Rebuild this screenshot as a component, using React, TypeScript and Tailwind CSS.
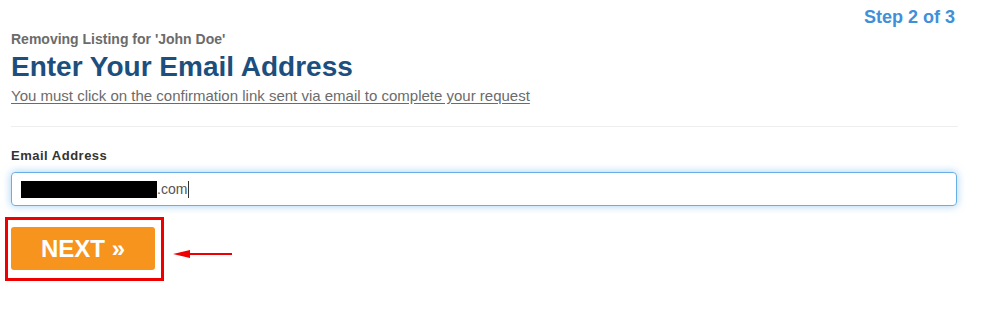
export default function App(): JSX.Element {
  return (
    <div
      className="h-[317px] w-[995px] bg-white"
      style={{ fontFamily: '"Liberation Sans", Arial, sans-serif' }}
    >
      <div className="w-[958px] pl-[11px] pt-[7px]">
        <div className="flex justify-end pr-[3px]">
          <span className="text-[18px] font-bold leading-[20px] text-[#3f8fda]">Step 2 of 3</span>
        </div>

        <p className="mt-[4px] text-[14px] font-bold leading-[16px] text-[#6b6b6b]">
          Removing Listing for 'John Doe'
        </p>
        <h1 className="mt-[4px] text-[28px] font-bold leading-[32px] text-[#1c4f7d]">
          Enter Your Email Address
        </h1>
        <p className="mt-[4px] text-[15px] leading-[18px] text-[#6b6b6b] underline underline-offset-[2px]">
          You must click on the confirmation link sent via email to complete your request
        </p>

        <hr className="mt-[21px] border-t border-[#eeeeee]" />

        <label className="mt-[21px] block text-[13px] font-bold leading-[16px] tracking-[0.5px] text-[#333]">
          Email Address
        </label>
        <div className="mt-[8px] flex h-[34px] w-[946px] items-center rounded-[4px] border border-[#66afe9] px-[9px] shadow-[0_0_8px_rgba(102,175,233,0.6)]">
          <span className="h-[17px] w-[136px] bg-black" />
          <span className="text-[14px] leading-[18px] text-[#555]">.com</span>
          <span className="ml-[1px] h-[17px] w-px bg-[#333]" />
        </div>

        <div className="mt-[21px] flex items-start">
          <div className="relative">
            <div className="pointer-events-none absolute -bottom-[11px] -left-[6px] -right-[9px] -top-[10px] border-[3px] border-[#ee0000]" />
            <button className="flex h-[43px] w-[144px] items-center justify-center rounded-[3px] bg-[#f7941d] text-[24px] font-bold text-white">
              NEXT »
            </button>
          </div>
          <svg className="ml-[18px] mt-[22px]" width="60" height="10" viewBox="0 0 60 10">
            <line x1="8" y1="5" x2="59" y2="5" stroke="#ee0000" strokeWidth="2.2" />
            <polygon points="0,5 17,1 17,9" fill="#ee0000" />
          </svg>
        </div>
      </div>
    </div>
  );
}
